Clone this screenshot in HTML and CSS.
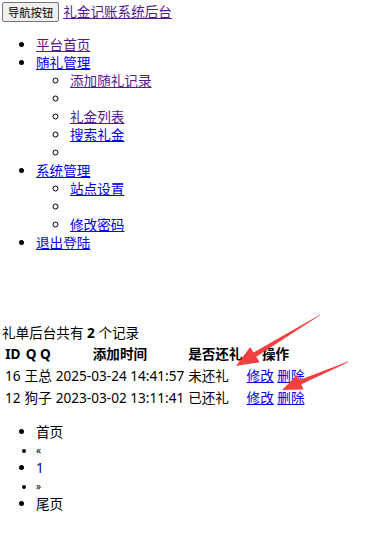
FILE: index.html
```html
<!DOCTYPE html>
<html lang="zh-CN">
<head>
  <meta charset="UTF-8">
  <title>礼金记账系统后台</title>
  <link rel="stylesheet" href="styles.css">
</head>
<body>
  <div class="top">
    <button class="nav-btn">导航按钮</button>
    <a href="#" class="visited">礼金记账系统后台</a>
  </div>

  <!-- 导航菜单 -->
  <ul class="menu">
    <li><a href="#" class="visited">平台首页</a></li>
    <li><a href="#">随礼管理</a>
      <ul class="sub">
        <li><a href="#" class="visited">添加随礼记录</a></li>
        <li class="blank"></li>
        <li><a href="#" class="visited">礼金列表</a></li>
        <li><a href="#">搜索礼金</a></li>
        <li class="blank"></li>
      </ul>
    </li>
    <li><a href="#">系统管理</a>
      <ul class="sub">
        <li><a href="#">站点设置</a></li>
        <li class="blank"></li>
        <li><a href="#">修改密码</a></li>
      </ul>
    </li>
    <li><a href="#">退出登陆</a></li>
  </ul>

  <div class="summary">礼单后台共有 <b>2</b> 个记录</div>

  <table class="records">
    <tr>
      <th>ID</th>
      <th>Q Q</th>
      <th>添加时间</th>
      <th>是否还礼</th>
      <th>操作</th>
    </tr>
    <tr>
      <td>16</td>
      <td>王总</td>
      <td>2025-03-24 14:41:57</td>
      <td>未还礼</td>
      <td><a href="#">修改</a> <a href="#">删除</a></td>
    </tr>
    <tr>
      <td>12</td>
      <td>狗子</td>
      <td>2023-03-02 13:11:41</td>
      <td>已还礼</td>
      <td><a href="#">修改</a> <a href="#">删除</a></td>
    </tr>
  </table>

  <!-- 分页 -->
  <ul class="pager">
    <li>首页</li>
    <li class="small">«</li>
    <li><a href="#" class="num">1</a></li>
    <li class="small">»</li>
    <li>尾页</li>
  </ul>

  <!-- 标注箭头 -->
  <svg class="marks" width="391" height="537" viewBox="0 0 391 537">
    <path d="M236 366 L250.2 346.9 L253.6 352.5 L320.3 314.6 L319.7 315.4 L256.2 356.7 L259.6 362.3 Z" fill="#f1403f"/>
    <path d="M282 390 L297.3 374.8 L299.5 380.1 L348.2 361.6 L347.8 362.4 L301.3 384.3 L303.5 389.6 Z" fill="#f1403f"/>
  </svg>
</body>
</html>
```

FILE: styles.css
```css
body {
  margin: 2px;
  font-family: "Noto Sans", "Noto Sans CJK SC", sans-serif;
  font-size: 13.6px;
  line-height: 18px;
  color: #000;
  background: #fff;
  position: relative;
}
a {
  color: #0000ee;
}
a.visited {
  color: #551a8b;
}

.top {
  height: 20px;
  display: flex;
  align-items: center;
  gap: 4px;
}
.nav-btn {
  height: 20px;
  padding: 0 5px;
  font-family: "Noto Sans CJK SC", sans-serif;
  font-size: 11.3px;
  color: #000;
  background: #efefef;
  border: 1px solid #767676;
  border-radius: 2px;
}

/* 菜单 */
.menu {
  margin: 13.6px 0;
  padding-left: 34px;
  list-style: disc;
}
.sub {
  margin: 0;
  padding-left: 34px;
  list-style: circle;
}
.blank {
  height: 18px;
}

.summary {
  margin-top: 72px;
}

/* 记录表 */
.records {
  border-spacing: 2px;
}
.records th,
.records td {
  padding: 1px;
  line-height: 18px;
}
.records th {
  font-weight: bold;
  text-align: center;
}
.records td {
  text-align: left;
}

/* 分页 */
.pager {
  margin: 13.6px 0;
  padding-left: 34px;
  list-style: disc;
}
.pager .small {
  font-size: 10px;
}
.pager .num {
  color: #000080;
  text-decoration: none;
}

.marks {
  position: absolute;
  top: -2px;
  left: -2px;
  pointer-events: none;
}
```
